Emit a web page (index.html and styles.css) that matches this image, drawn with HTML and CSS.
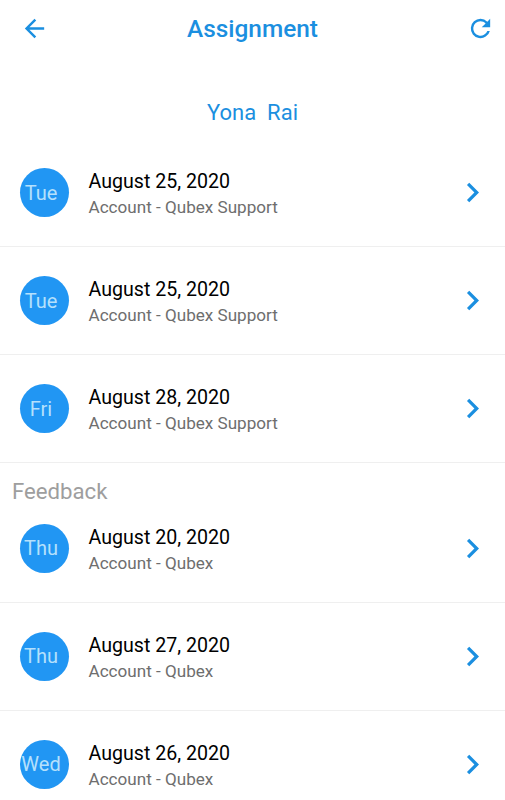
FILE: index.html
```html
<!DOCTYPE html>
<html lang="en">
<head>
    <meta charset="UTF-8">
    <meta name="viewport" content="width=device-width, initial-scale=1.0">
    <title>Assignment</title>
    <link rel="stylesheet" href="styles.css">
</head>
<body>
    <header class="topbar">
        <svg class="icon" viewBox="0 0 24 24"><path d="M20 11H7.83l5.59-5.59L12 4l-8 8 8 8 1.41-1.41L7.83 13H20v-2z"/></svg>
        <h1>Assignment</h1>
        <svg class="icon" viewBox="0 0 24 24"><path d="M17.65 6.35A7.96 7.96 0 0 0 12 4a8 8 0 1 0 7.73 10h-2.08A6 6 0 1 1 12 6c1.66 0 3.14.69 4.22 1.78L13 11h7V4l-2.35 2.35z"/></svg>
    </header>
    <div class="person">Yona&nbsp; Rai</div>

    <ul class="list">
        <li class="item">
            <div class="day">Tue</div>
            <div class="info">
                <div class="date">August 25, 2020</div>
                <div class="account">Account - Qubex Support</div>
            </div>
            <svg class="chevron" viewBox="0 0 24 24"><path d="M10 6L8.59 7.41 13.17 12l-4.58 4.59L10 18l6-6z"/></svg>
        </li>
        <li class="item">
            <div class="day">Tue</div>
            <div class="info">
                <div class="date">August 25, 2020</div>
                <div class="account">Account - Qubex Support</div>
            </div>
            <svg class="chevron" viewBox="0 0 24 24"><path d="M10 6L8.59 7.41 13.17 12l-4.58 4.59L10 18l6-6z"/></svg>
        </li>
        <li class="item">
            <div class="day">Fri</div>
            <div class="info">
                <div class="date">August 28, 2020</div>
                <div class="account">Account - Qubex Support</div>
            </div>
            <svg class="chevron" viewBox="0 0 24 24"><path d="M10 6L8.59 7.41 13.17 12l-4.58 4.59L10 18l6-6z"/></svg>
        </li>
    </ul>

    <h2>Feedback</h2>
    <ul class="list">
        <li class="item">
            <div class="day">Thu</div>
            <div class="info">
                <div class="date">August 20, 2020</div>
                <div class="account">Account - Qubex</div>
            </div>
            <svg class="chevron" viewBox="0 0 24 24"><path d="M10 6L8.59 7.41 13.17 12l-4.58 4.59L10 18l6-6z"/></svg>
        </li>
        <li class="item">
            <div class="day">Thu</div>
            <div class="info">
                <div class="date">August 27, 2020</div>
                <div class="account">Account - Qubex</div>
            </div>
            <svg class="chevron" viewBox="0 0 24 24"><path d="M10 6L8.59 7.41 13.17 12l-4.58 4.59L10 18l6-6z"/></svg>
        </li>
        <li class="item">
            <div class="day">Wed</div>
            <div class="info">
                <div class="date">August 26, 2020</div>
                <div class="account">Account - Qubex</div>
            </div>
            <svg class="chevron" viewBox="0 0 24 24"><path d="M10 6L8.59 7.41 13.17 12l-4.58 4.59L10 18l6-6z"/></svg>
        </li>
    </ul>
</body>
</html>
```
FILE: styles.css
```css
* { box-sizing: border-box; }
body { margin: 0; height: 800px; overflow: hidden; background: #fff; font-family: Roboto, sans-serif; }
.topbar { display: flex; align-items: center; height: 57px; padding: 0 10px 0 20px; }
.topbar h1 { flex: 1; margin: 0 10px 0 0; text-align: center; font-size: 24.4px; font-weight: 500; color: #1b8fe0; }
.icon { width: 29px; height: 29px; fill: #1b8fe0; }
.person { height: 82px; padding-top: 42px; line-height: 28px; text-align: center; font-size: 22px; color: #1b8fe0; }
.list { list-style: none; margin: 0; padding: 0; }
.item { display: flex; align-items: center; height: 108px; padding: 0 13px 0 19.5px; border-bottom: 1px solid #efefef; }
.day { display: flex; align-items: center; justify-content: center; width: 49px; height: 49px; padding-right: 6px; border-radius: 50%; background: #2196f3; color: #b5e0fc; font-size: 20px; }
.info { flex: 1; margin-left: 20px; padding-top: 4px; }
.date { line-height: 26px; font-size: 19.6px; color: #000; }
.account { line-height: 25px; font-size: 17.1px; color: #6e6e6e; }
.chevron { width: 39px; height: 39px; fill: #1b8fe0; }
h2 { height: 31.5px; margin: 0; padding: 14px 12px 0; line-height: 28px; font-size: 22.2px; font-weight: 400; color: #9e9e9e; }
```
